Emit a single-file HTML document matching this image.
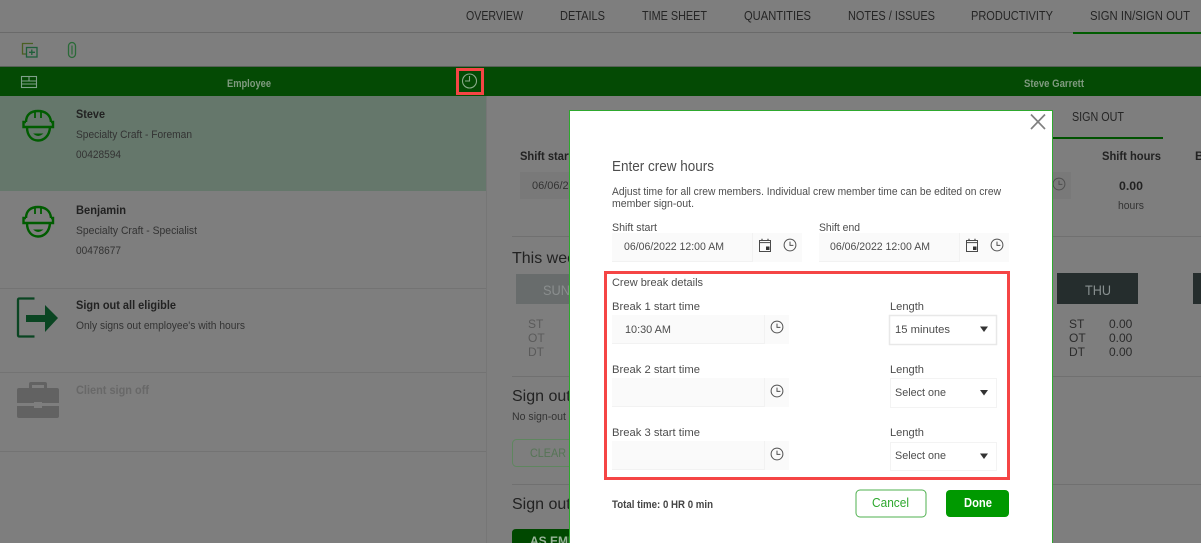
<!DOCTYPE html>
<html lang="en">
<head>
<meta charset="utf-8">
<title>Enter crew hours</title>
<style>
html,body{margin:0;padding:0;background:#7e7e7e;width:1201px;height:543px;overflow:hidden}
svg{display:block}
text{font-family:"Liberation Sans",Arial,sans-serif;font-size:11px}
.nav{font-size:12.500px;fill:#252525}
.b{font-weight:bold}
.d{fill:#222}
.m{fill:#4d4d4d}
.g{fill:#333}
</style>
</head>
<body>
<svg width="1201" height="543" viewBox="0 0 1201 543" xmlns="http://www.w3.org/2000/svg">
<defs>
<g id="helmet" fill="none" stroke="#005c00" stroke-width="2.400">
<path d="M26 122C26 114.500 31 111 38 111C45 111 50.500 114.500 51 122"/>
<path d="M26 122H23.500V127H53V122H51"/>
<path d="M27 127C27 136 32 140.500 38 140.500C44 140.500 49.500 136 50 127"/>
<path d="M35 112V118M41 112V118" stroke-width="1.800"/>
<path d="M34.500 134Q38 137 42 134Z" fill="#005c00" stroke-width="1"/>
</g>
<g id="clk" fill="none" stroke="#4f4f4f" stroke-width="1">
<circle cx="0" cy="0" r="5.900"/>
<path d="M0 -3.400V0.400H3.400"/>
</g>
<g id="cal">
<path d="M-5.500 -4.500H5.500V6.500H-5.500Z" fill="none" stroke="#4a4a4a" stroke-width="1"/>
<path d="M-5.500 -2.400H5.500" stroke="#4a4a4a" stroke-width="1"/>
<path d="M-3 -6.200V-4.500M3 -6.200V-4.500" stroke="#4a4a4a" stroke-width="1.200"/>
<rect x="1" y="1.500" width="3.500" height="3.500" fill="#333"/>
</g>
</defs>

<!-- page background -->
<rect width="1201" height="543" fill="#7e7e7e"/>

<!-- top nav -->
<rect x="0" y="32" width="1201" height="1" fill="#6a6a6a"/>
<rect x="1073" y="32" width="128" height="2" fill="#005c00"/>
<text class="nav" x="466" y="20" textLength="57" lengthAdjust="spacingAndGlyphs">OVERVIEW</text>
<text class="nav" x="560" y="20" textLength="45" lengthAdjust="spacingAndGlyphs">DETAILS</text>
<text class="nav" x="642" y="20" textLength="65" lengthAdjust="spacingAndGlyphs">TIME SHEET</text>
<text class="nav" x="744" y="20" textLength="67" lengthAdjust="spacingAndGlyphs">QUANTITIES</text>
<text class="nav" x="848" y="20" textLength="87" lengthAdjust="spacingAndGlyphs">NOTES / ISSUES</text>
<text class="nav" x="971" y="20" textLength="82" lengthAdjust="spacingAndGlyphs">PRODUCTIVITY</text>
<text class="nav" x="1090" y="20" textLength="100" lengthAdjust="spacingAndGlyphs">SIGN IN/SIGN OUT</text>

<!-- toolbar icons -->
<g fill="none" stroke-width="1.300">
<path d="M33 43.500H22.500V54H26" stroke="#4a5f22"/>
<rect x="26.500" y="47.500" width="10.500" height="9.500" stroke="#1f5f3a"/>
<path d="M31.800 49.500V55M29 52.300H35" stroke="#1f5f3a"/>
</g>
<rect x="68.500" y="42.500" width="7" height="15" rx="3.500" fill="none" stroke="#2a6a38" stroke-width="1.300"/>
<path d="M72 45.500V54.500" fill="none" stroke="#2a6a38" stroke-width="1.200"/>

<!-- green bar -->
<rect x="0" y="66" width="1201" height="1" fill="#566056"/>
<rect x="0" y="67" width="1201" height="29" fill="#044a04"/>
<g fill="none" stroke="#7fa08a" stroke-width="1.100">
<rect x="21.500" y="76.500" width="15" height="11"/>
<path d="M22 81H36M22 84H36M29 76.500V81"/>
</g>
<text class="b" x="227" y="87" fill="#7f9a7f" textLength="44" lengthAdjust="spacingAndGlyphs">Employee</text>
<text class="b" x="1024" y="87" fill="#7f9a7f" textLength="60" lengthAdjust="spacingAndGlyphs">Steve Garrett</text>
<g fill="none" stroke="#8aaa8a" stroke-width="1.100">
<circle cx="469.500" cy="81" r="7"/>
<path d="M469.500 76V81H465"/>
</g>
<rect x="457.500" y="69.500" width="25" height="24" fill="none" stroke="#f54545" stroke-width="3"/>

<!-- left panel -->
<rect x="0" y="96" width="486" height="95" fill="#65776b"/>
<rect x="486" y="96" width="1" height="447" fill="#767676"/>
<rect x="0" y="288" width="486" height="1" fill="#737373"/>
<rect x="0" y="372" width="486" height="1" fill="#737373"/>
<rect x="0" y="451" width="486" height="1" fill="#737373"/>

<use href="#helmet"/>
<use href="#helmet" y="96"/>
<text class="b d" x="76" y="118" textLength="29" lengthAdjust="spacingAndGlyphs" style="font-size:12px">Steve</text>
<text class="g" x="76" y="138" textLength="116" lengthAdjust="spacingAndGlyphs">Specialty Craft - Foreman</text>
<text class="g" x="76" y="158" textLength="45" lengthAdjust="spacingAndGlyphs">00428594</text>
<text class="b d" x="76" y="214" textLength="50" lengthAdjust="spacingAndGlyphs" style="font-size:12px">Benjamin</text>
<text class="g" x="76" y="234" textLength="121" lengthAdjust="spacingAndGlyphs">Specialty Craft - Specialist</text>
<text class="g" x="76" y="254" textLength="45" lengthAdjust="spacingAndGlyphs">00478677</text>

<path d="M34.500 298.500H19.500Q18 298.500 18 300V335Q18 336.500 19.500 336.500H34.500" fill="none" stroke="#0a4522" stroke-width="2.300"/>
<path d="M26 315H45V305L58 318L45 332V322H26Z" fill="#0a4522"/>
<text class="b d" x="76" y="309" textLength="100" lengthAdjust="spacingAndGlyphs" style="font-size:12px">Sign out all eligible</text>
<text class="g" x="76" y="329" textLength="169" lengthAdjust="spacingAndGlyphs">Only signs out employee's with hours</text>

<path d="M29 389V384Q29 382 31 382H45Q47 382 47 384V389H44V385H32V389Z" fill="#626262"/>
<path d="M19 388H57Q59 388 59 390V403H42V402H34V403H17V390Q17 388 19 388Z" fill="#626262"/>
<path d="M17 406H34V408H42V406H59V416Q59 418 57 418H19Q17 418 17 416Z" fill="#626262"/>
<text class="b" x="76" y="394" fill="#686868" textLength="73" lengthAdjust="spacingAndGlyphs" style="font-size:12px">Client sign off</text>

<!-- background main content -->
<text class="nav" x="1072" y="121" textLength="52" lengthAdjust="spacingAndGlyphs">SIGN OUT</text>
<rect x="1053" y="137" width="110" height="2" fill="#005200"/>
<text class="b d" x="520" y="160" style="font-size:12px" textLength="52" lengthAdjust="spacingAndGlyphs">Shift start</text>
<rect x="520" y="172" width="49" height="27" fill="#797979"/>
<text class="g" x="532" y="189" textLength="55" lengthAdjust="spacingAndGlyphs">06/06/2022</text>
<rect x="1053" y="172" width="18" height="27" fill="#797979"/>
<use href="#clk" x="1059" y="184"/>
<text class="b d" x="1102" y="160" style="font-size:12px" textLength="59" lengthAdjust="spacingAndGlyphs">Shift hours</text>
<text class="b d" x="1195" y="160" style="font-size:12px">B</text>
<text class="b d" x="1119" y="190" style="font-size:12px" textLength="24" lengthAdjust="spacingAndGlyphs">0.00</text>
<text class="g" x="1118" y="209" textLength="26" lengthAdjust="spacingAndGlyphs">hours</text>
<rect x="512" y="236" width="689" height="1" fill="#707070"/>
<text class="d" x="512" y="263" style="font-size:16px">This week</text>
<rect x="516" y="274" width="60" height="30" fill="#686c6c"/>
<text x="543" y="295" fill="#8a8e8e" style="font-size:14px" textLength="27" lengthAdjust="spacingAndGlyphs">SUN</text>
<text x="528" y="328" fill="#5a5a5a" style="font-size:12px">ST</text>
<text x="528" y="342" fill="#5a5a5a" style="font-size:12px">OT</text>
<text x="528" y="356" fill="#5a5a5a" style="font-size:12px">DT</text>
<rect x="512" y="376" width="689" height="1" fill="#707070"/>
<text class="d" x="512" y="401" style="font-size:16px">Sign out</text>
<text class="g" x="512" y="420" textLength="54" lengthAdjust="spacingAndGlyphs">No sign-out</text>
<rect x="512.500" y="439.500" width="70" height="27" rx="4" fill="none" stroke="#5f865f"/>
<text x="530" y="457" fill="#567556" style="font-size:12px" textLength="36" lengthAdjust="spacingAndGlyphs">CLEAR</text>
<rect x="512" y="484" width="689" height="1" fill="#707070"/>
<text class="d" x="512" y="509" style="font-size:16px">Sign out</text>
<path d="M512 543V533Q512 529 516 529H575V543Z" fill="#004800"/>
<text x="530" y="545" fill="#9ab49a" style="font-size:12px;font-weight:bold">AS EMP</text>

<rect x="1057" y="273" width="81" height="31" fill="#252d2d"/>
<text x="1085" y="295" fill="#889090" style="font-size:14px" textLength="26" lengthAdjust="spacingAndGlyphs">THU</text>
<g fill="#2b2b2b">
<text x="1069" y="328" style="font-size:12px">ST</text>
<text x="1069" y="342" style="font-size:12px">OT</text>
<text x="1069" y="356" style="font-size:12px">DT</text>
<text x="1109" y="328" style="font-size:12px">0.00</text>
<text x="1109" y="342" style="font-size:12px">0.00</text>
<text x="1109" y="356" style="font-size:12px">0.00</text>
</g>
<rect x="1193" y="273" width="8" height="31" fill="#252d2d"/>

<!-- modal -->
<rect x="569" y="110" width="484" height="441" fill="#2ea82e"/>
<rect x="570" y="111" width="482" height="439" fill="#fff"/>
<path d="M1031 114.500L1045 129M1045 114.500L1031 129" stroke="#808080" stroke-width="1.700" fill="none"/>
<text class="m" x="612" y="171" style="font-size:14.500px" textLength="102" lengthAdjust="spacingAndGlyphs">Enter crew hours</text>
<text class="m" x="612" y="195" textLength="389" lengthAdjust="spacingAndGlyphs">Adjust time for all crew members. Individual crew member time can be edited on crew</text>
<text class="m" x="612" y="207" textLength="82" lengthAdjust="spacingAndGlyphs">member sign-out.</text>

<text class="m" x="612" y="231" textLength="45" lengthAdjust="spacingAndGlyphs">Shift start</text>
<rect x="612" y="233" width="190" height="29" fill="#fafafa"/>
<rect x="612" y="261" width="141" height="1" fill="#f2f2f2"/>
<rect x="752" y="233" width="1" height="29" fill="#f2f2f2"/>
<text class="m" x="624" y="250" textLength="100" lengthAdjust="spacingAndGlyphs">06/06/2022 12:00 AM</text>
<use href="#cal" x="765" y="245"/>
<use href="#clk" x="790" y="245"/>

<text class="m" x="819" y="231" textLength="41" lengthAdjust="spacingAndGlyphs">Shift end</text>
<rect x="819" y="233" width="190" height="29" fill="#fafafa"/>
<rect x="819" y="261" width="141" height="1" fill="#f2f2f2"/>
<rect x="959" y="233" width="1" height="29" fill="#f2f2f2"/>
<text class="m" x="830" y="250" textLength="100" lengthAdjust="spacingAndGlyphs">06/06/2022 12:00 AM</text>
<use href="#cal" x="972" y="245"/>
<use href="#clk" x="997" y="245"/>

<rect x="605.500" y="272.500" width="403" height="206" fill="none" stroke="#f54545" stroke-width="3"/>
<text class="m" x="612" y="286" textLength="91" lengthAdjust="spacingAndGlyphs">Crew break details</text>

<!-- break 1 -->
<text class="m" x="612" y="310" textLength="88" lengthAdjust="spacingAndGlyphs">Break 1 start time</text>
<rect x="612" y="315" width="177" height="29" fill="#fafafa"/>
<rect x="612" y="343" width="153" height="1" fill="#f2f2f2"/>
<rect x="764" y="315" width="1" height="29" fill="#f2f2f2"/>
<text class="m" x="625" y="333" textLength="46" lengthAdjust="spacingAndGlyphs">10:30 AM</text>
<use href="#clk" x="777" y="327"/>
<text class="m" x="890" y="310" textLength="34" lengthAdjust="spacingAndGlyphs">Length</text>
<rect x="889.500" y="315.500" width="107" height="29" fill="#fff" stroke="#e8e8e8" stroke-width="1.500"/>
<text class="m" x="895" y="333" textLength="55" lengthAdjust="spacingAndGlyphs">15 minutes</text>
<path d="M980 326.500H988L984 332Z" fill="#333"/>

<!-- break 2 -->
<text class="m" x="612" y="373" textLength="88" lengthAdjust="spacingAndGlyphs">Break 2 start time</text>
<rect x="612" y="378" width="177" height="29" fill="#fafafa"/>
<rect x="612" y="406" width="153" height="1" fill="#f2f2f2"/>
<rect x="764" y="378" width="1" height="29" fill="#f2f2f2"/>
<use href="#clk" x="777" y="391"/>
<text class="m" x="890" y="373" textLength="34" lengthAdjust="spacingAndGlyphs">Length</text>
<rect x="890.500" y="378.500" width="106" height="29" fill="#fff" stroke="#f3f3f3"/>
<text class="m" x="895" y="396" textLength="51" lengthAdjust="spacingAndGlyphs">Select one</text>
<path d="M980 390H988L984 395.500Z" fill="#333"/>

<!-- break 3 -->
<text class="m" x="612" y="436" textLength="88" lengthAdjust="spacingAndGlyphs">Break 3 start time</text>
<rect x="612" y="441" width="177" height="29" fill="#fafafa"/>
<rect x="612" y="469" width="153" height="1" fill="#f2f2f2"/>
<rect x="764" y="441" width="1" height="29" fill="#f2f2f2"/>
<use href="#clk" x="777" y="454"/>
<text class="m" x="890" y="436" textLength="34" lengthAdjust="spacingAndGlyphs">Length</text>
<rect x="890.500" y="442.500" width="106" height="28" fill="#fff" stroke="#f3f3f3"/>
<text class="m" x="895" y="459" textLength="51" lengthAdjust="spacingAndGlyphs">Select one</text>
<path d="M980 453.500H988L984 459Z" fill="#333"/>

<!-- footer -->
<text class="b" x="612" y="508" fill="#444" textLength="101" lengthAdjust="spacingAndGlyphs">Total time: 0 HR 0 min</text>
<rect x="856" y="490" width="70" height="27" rx="4" fill="#fff" stroke="#4fb04f"/>
<text x="872" y="507" fill="#2ea82e" style="font-size:13px" textLength="37" lengthAdjust="spacingAndGlyphs">Cancel</text>
<rect x="946" y="490" width="63" height="27" rx="4" fill="#009900"/>
<text class="b" x="964" y="507" fill="#fff" style="font-size:13px" textLength="28" lengthAdjust="spacingAndGlyphs">Done</text>
</svg>
</body>
</html>
